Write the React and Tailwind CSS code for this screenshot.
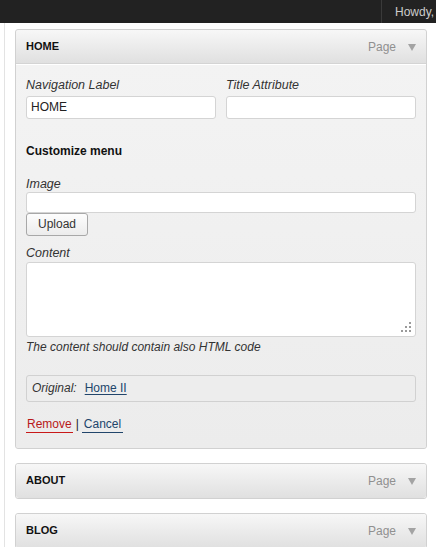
import React from "react";

function Arrow() {
  return (
    <svg width="8" height="8" viewBox="0 0 8 8" className="block">
      <path d="M0 1 L8 1 L4 8 Z" fill="#a3a3a3" />
    </svg>
  );
}

function ItemHeader({ title, open }) {
  return (
    <div
      className={
        "h-[34px] flex items-center justify-between pl-[10px] pr-[10px] bg-linear-to-b from-[#f7f7f7] to-[#e0e0e0] " +
        (open ? "border-b border-[#d4d4d4] rounded-t-[3px]" : "rounded-[3px]")
      }
    >
      <span className="text-[11px] font-bold text-[#111]">{title}</span>
      <div className="flex items-center gap-[12px]">
        <span className="text-[12px] text-[#909090]">Page</span>
        <Arrow />
      </div>
    </div>
  );
}

function Grip() {
  const dots = [
    [8, 0],
    [4, 4],
    [8, 4],
    [0, 8],
    [4, 8],
    [8, 8],
  ];
  return (
    <svg width="10" height="10" viewBox="0 0 10 10" className="absolute right-[5px] bottom-[5px]">
      {dots.map(([x, y], i) => (
        <rect key={i} x={x} y={y} width="2" height="2" fill="#9a9a9a" />
      ))}
    </svg>
  );
}

export default function App() {
  return (
    <div
      className="w-[436px] h-[547px] overflow-hidden bg-white text-[#333]"
      style={{ fontFamily: '"Liberation Sans", Arial, sans-serif' }}
    >
      <div className="h-[23px] bg-[#222222] flex justify-end">
        <div className="w-[55px] border-l border-[#3a3a3a] pl-[13px] flex items-center overflow-hidden whitespace-nowrap">
          <span className="text-[12px] text-[#cccccc]">Howdy,</span>
        </div>
      </div>
      <div className="ml-[4px] border-l border-[#e3e3e3] h-[524px] pl-[10px] pt-[6px]">
        <div className="w-[412px] flex flex-col gap-[14px]">
          {/* HOME item */}
          <div className="border border-[#d1d1d1] rounded-[3px] bg-[#f0f0f0]">
            <ItemHeader title="HOME" open />
            <div className="border-t border-white px-[10px] pt-[13px] pb-[15px] bg-linear-to-b from-[#f3f3f3] to-[#ececec] rounded-b-[3px]">
              <div className="flex gap-[10px]">
                <div className="flex-1">
                  <div className="text-[12.5px] italic leading-[14px] mb-[2px] text-[#333]">Navigation Label</div>
                  <input
                    readOnly
                    value="HOME"
                    className="w-full h-[23px] border border-[#d4d4d4] rounded-[3px] bg-white px-[4px] text-[12px] text-[#222] outline-none"
                  />
                </div>
                <div className="flex-1">
                  <div className="text-[12.5px] italic leading-[14px] mb-[2px] text-[#333]">Title Attribute</div>
                  <input
                    readOnly
                    value=""
                    className="w-full h-[23px] border border-[#d4d4d4] rounded-[3px] bg-white px-[4px] text-[12px] outline-none"
                  />
                </div>
              </div>
              <div className="mt-[25px] text-[12px] font-bold leading-[15px] text-[#111]">Customize menu</div>
              <div className="mt-[17px] text-[12.5px] italic leading-[16px] text-[#333]">Image</div>
              <input
                readOnly
                value=""
                className="block w-full h-[21px] border border-[#d4d4d4] rounded-[3px] bg-white px-[4px] text-[12px] outline-none"
              />
              <button className="block w-[62px] h-[23px] border border-[#a8a8a8] rounded-[3px] bg-linear-to-b from-[#fdfdfd] to-[#ececec] text-[12px] text-[#333]">
                Upload
              </button>
              <div className="mt-[9px] text-[12.5px] italic leading-[16px] mb-[1px] text-[#333]">Content</div>
              <div className="relative">
                <textarea
                  readOnly
                  className="block w-full h-[75px] border border-[#d4d4d4] rounded-[3px] bg-white resize-none outline-none"
                />
                <Grip />
              </div>
              <div className="mt-[3px] text-[12px] italic leading-[15px] text-[#333]">
                The content should contain also HTML code
              </div>
              <div className="mt-[20px] h-[27px] border border-[#d1d1d1] rounded-[3px] bg-[#ededed] flex items-center pl-[5px] text-[12px]">
                <span className="italic text-[#333]">Original:</span>
                <span className="ml-[8px] underline text-[#21456b] underline-offset-[2px]">Home II</span>
              </div>
              <div className="mt-[15px] flex items-start text-[12px] leading-[15px]">
                <span className="inline-block px-[1px] border-b border-[#c81818] text-[#b81818]">Remove</span>
                <span className="mx-[3px] text-[#222]">|</span>
                <span className="inline-block px-[2px] border-b border-[#21456b] text-[#21456b]">Cancel</span>
              </div>
            </div>
          </div>
          {/* ABOUT */}
          <div className="border border-[#d1d1d1] rounded-[3px]">
            <ItemHeader title="ABOUT" />
          </div>
          {/* BLOG */}
          <div className="border border-[#d1d1d1] rounded-[3px]">
            <ItemHeader title="BLOG" />
          </div>
        </div>
      </div>
    </div>
  );
}
